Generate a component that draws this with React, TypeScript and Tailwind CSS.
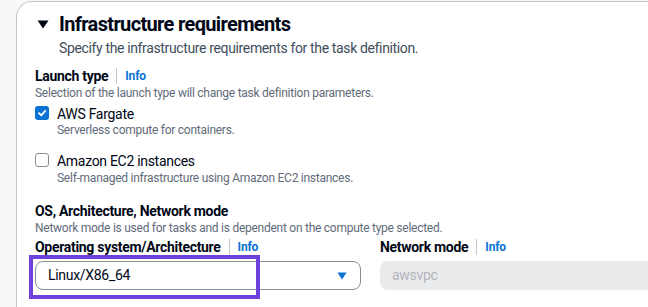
import React from "react";

const font = { fontFamily: "Roboto, 'Open Sans', Arial, sans-serif" };

function Info() {
  return (
    <>
      <span className="mx-2 inline-block h-[16px] w-px bg-[#c6c6cd]" />
      <span className="text-[12px] font-bold tracking-[-0.2px] text-[#0972d3]">Info</span>
    </>
  );
}

function Checkbox({ checked }: { checked: boolean }) {
  if (checked) {
    return (
      <span className="flex h-[14px] w-[14px] shrink-0 items-center justify-center rounded-[3px] bg-[#0972d3]">
        <svg width="10" height="10" viewBox="0 0 10 10">
          <path d="M2 5.2 L4.2 7.3 L8.2 2.8" fill="none" stroke="white" strokeWidth="1.8" strokeLinecap="round" strokeLinejoin="round" />
        </svg>
      </span>
    );
  }
  return <span className="block h-[14px] w-[14px] shrink-0 rounded-[3px] border border-[#8c8c94] bg-white" />;
}

export default function App() {
  return (
    <div className="h-[307px] w-[648px] overflow-hidden bg-[#f8f8f8] pl-[16px] pt-[1px]" style={font}>
      <div className="w-[720px] rounded-tl-[16px] border-l border-t border-[#c6c6cd] bg-white pl-[18px] pt-[10px] pb-10 text-[#000716] tracking-[-0.3px]">
        <div className="flex items-center">
          <span className="flex w-[16px] justify-center">
            <svg width="12" height="9" viewBox="0 0 12 9">
              <path d="M0.5 0.5 H11.5 L6 8.5 Z" fill="#000716" />
            </svg>
          </span>
          <h2 className="ml-[8px] text-[20px] font-bold leading-[24px] tracking-[-0.65px]">Infrastructure requirements</h2>
        </div>
        <p className="ml-[24px] mt-[2px] text-[14px] leading-[20px] tracking-[-0.36px] text-[#414d5c]">
          Specify the infrastructure requirements for the task definition.
        </p>

        <div className="mt-[8px] flex items-center text-[14px] font-bold leading-[20px]">
          Launch type
          <Info />
        </div>
        <p className="mt-[-1px] text-[12px] leading-[16px] tracking-[-0.26px] text-[#5f6b7a]">
          Selection of the launch type will change task definition parameters.
        </p>

        <div className="mt-[3px] flex items-start gap-[8px]">
          <span className="mt-[2px]">
            <Checkbox checked />
          </span>
          <div>
            <div className="text-[14px] leading-[20px]">AWS Fargate</div>
            <div className="mt-[-2px] text-[12px] leading-[16px] tracking-[-0.26px] text-[#5f6b7a]">Serverless compute for containers.</div>
          </div>
        </div>

        <div className="mt-[13px] flex items-start gap-[8px]">
          <span className="mt-[2px]">
            <Checkbox checked={false} />
          </span>
          <div>
            <div className="text-[14px] leading-[20px]">Amazon EC2 instances</div>
            <div className="mt-[-1px] text-[12px] leading-[16px] tracking-[-0.26px] text-[#5f6b7a]">
              Self-managed infrastructure using Amazon EC2 instances.
            </div>
          </div>
        </div>

        <div className="mt-[15px] text-[14px] font-bold leading-[20px]">OS, Architecture, Network mode</div>
        <p className="mt-[-1px] text-[12px] leading-[16px] tracking-[-0.26px] text-[#5f6b7a]">
          Network mode is used for tasks and is dependent on the compute type selected.
        </p>

        <div className="mt-[1px] flex gap-[19px]">
          <div className="relative w-[326px] shrink-0">
            <div className="flex items-center text-[14px] font-bold leading-[20px]">
              Operating system/Architecture
              <Info />
            </div>
            <div className="mt-[4px] flex h-[29px] items-center justify-between rounded-[8px] border border-[#8c8c94] bg-white pl-[12px] pr-[13px] text-[14px]">
              <span>Linux/X86_64</span>
              <svg width="10" height="8" viewBox="0 0 10 8">
                <path d="M0.5 0.5 H9.5 L5 7.5 Z" fill="#0972d3" />
              </svg>
            </div>
            <div className="pointer-events-none absolute left-[-6px] top-[18px] h-[44px] w-[231px] border-[4px] border-[#6d41dc]" />
          </div>
          <div className="w-[320px] shrink-0">
            <div className="flex items-center text-[14px] font-bold leading-[20px]">
              Network mode
              <Info />
            </div>
            <div className="mt-[4px] flex h-[29px] items-center rounded-[8px] bg-[#e9ebed] pl-[12px] text-[14px] text-[#b4b4bb]">
              awsvpc
            </div>
          </div>
        </div>

        <div className="mt-[15px] flex items-center text-[14px] font-bold leading-[20px]">
          Task size
          <Info />
        </div>
      </div>
    </div>
  );
}
